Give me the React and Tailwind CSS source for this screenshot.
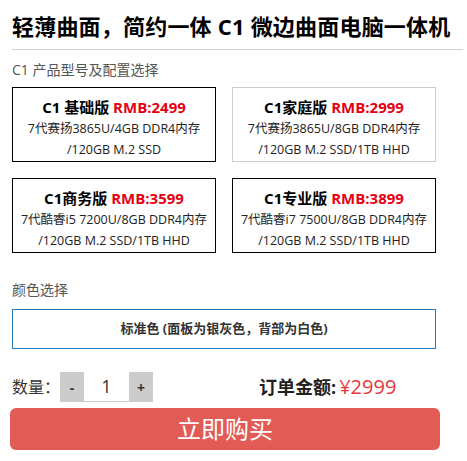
export default function App() {
  const font = { fontFamily: '"Open Sans", "Noto Sans CJK SC", sans-serif' };
  const cards = [
    { name: "C1 基础版", price: "RMB:2499", l1: "7代赛扬3865U/4GB DDR4内存", l2: "/120GB M.2 SSD", border: "border-black" },
    { name: "C1家庭版", price: "RMB:2999", l1: "7代赛扬3865U/8GB DDR4内存", l2: "/120GB M.2 SSD/1TB HHD", border: "border-[#cccccc]" },
    { name: "C1商务版", price: "RMB:3599", l1: "7代酷睿i5 7200U/8GB DDR4内存", l2: "/120GB M.2 SSD/1TB HHD", border: "border-black" },
    { name: "C1专业版", price: "RMB:3899", l1: "7代酷睿i7 7500U/8GB DDR4内存", l2: "/120GB M.2 SSD/1TB HHD", border: "border-black" },
  ];
  return (
    <div className="w-[467px] h-[461px] bg-white text-[#333] overflow-hidden" style={font}>
      <div className="pl-3 pr-1">
        <h1 className="pt-[8px] text-[22px] font-bold leading-[36px] text-black whitespace-nowrap tracking-[0.2px]">
          轻薄曲面，简约一体 C1 微边曲面电脑一体机
        </h1>
        <div className="mt-[5px] h-px bg-[#d0d0d0]" />
        <div className="mt-[10px] text-[14px] leading-[20px] text-[#555]">C1 产品型号及配置选择</div>
        <div className="mt-[7px] grid grid-cols-[204px_204px] gap-x-4 gap-y-4">
          {cards.map((c) => (
            <div key={c.name} className={`h-[75px] border ${c.border} flex flex-col items-center pt-[8px]`}>
              <div className="text-[15px] font-bold leading-[22px] text-black whitespace-nowrap">
                {c.name} <span className="text-[#e60012]">{c.price}</span>
              </div>
              <div className="text-[12.5px] leading-[21px] text-[#222] whitespace-nowrap">{c.l1}</div>
              <div className="text-[12.5px] leading-[21px] text-[#222] whitespace-nowrap">{c.l2}</div>
            </div>
          ))}
        </div>
        <div className="mt-[27px] text-[14px] leading-[20px] text-[#555]">颜色选择</div>
        <div className="mt-[9px] w-[424px] h-[40px] border border-[#2878b8] flex items-center justify-center text-[13px] font-bold text-[#333]">
          标准色 (面板为银灰色，背部为白色)
        </div>
        <div className="mt-[23px] flex items-center h-[30px]">
          <span className="text-[16px] text-[#333] w-[48px]">数量：</span>
          <div className="flex h-[30px]">
            <button className="w-[24px] h-[30px] bg-[#cccccc] text-[14px] font-bold text-[#333]">-</button>
            <div className="w-[45px] h-[30px] bg-white border-b border-[#cccccc] flex items-center justify-center text-[18px] text-[#333]">1</div>
            <button className="w-[24px] h-[30px] bg-[#cccccc] text-[14px] font-bold text-[#333]">+</button>
          </div>
          <div className="ml-[106px] flex items-baseline whitespace-nowrap">
            <span className="text-[18px] font-bold text-[#222]">订单金额:</span>
            <span className="ml-[3px] text-[20px] text-[#e4393c]">¥2999</span>
          </div>
        </div>
      </div>
      <div className="mt-[6px] ml-[10px] w-[430px] h-[42px] rounded-[6px] bg-[#e35b55] flex items-center justify-center text-white text-[24px] leading-none">
        立即购买
      </div>
    </div>
  );
}
